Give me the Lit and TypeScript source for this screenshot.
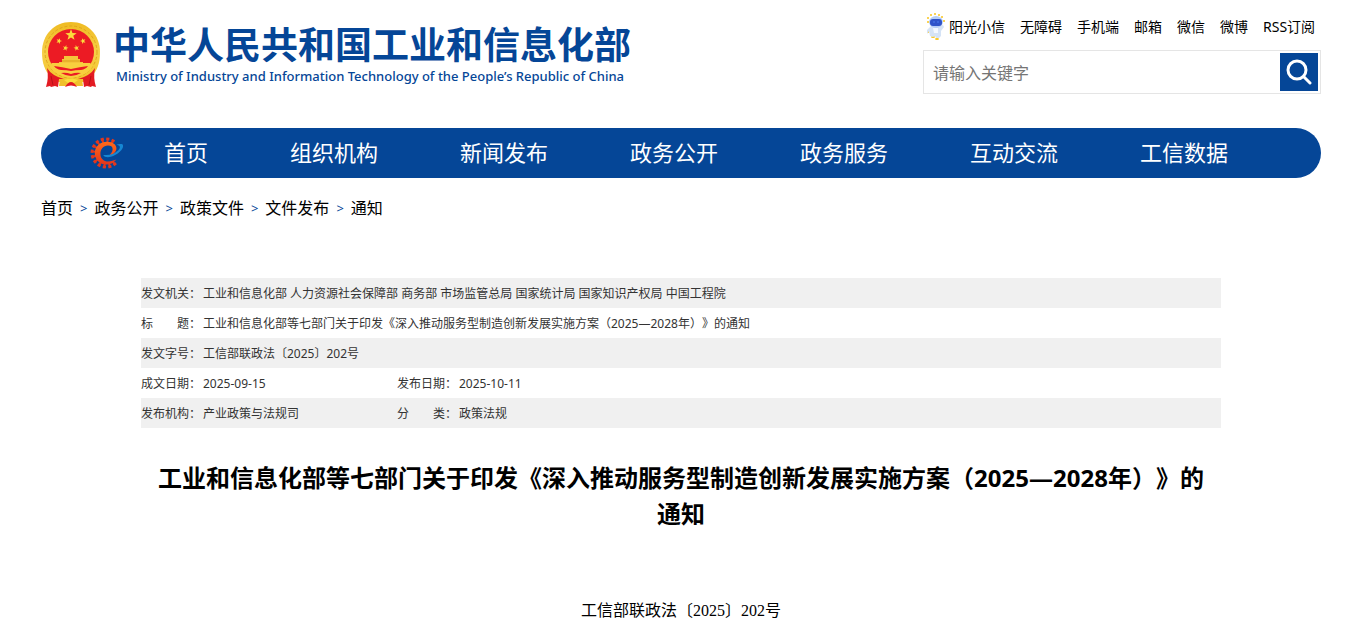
import { LitElement, html, css, svg } from "lit";
import { customElement } from "lit/decorators.js";

const star = (cx: number, cy: number, r: number, turn = 0) => {
  const points = Array.from({ length: 10 }, (_, i) => {
    const a = ((i * 36 - 90 + turn) * Math.PI) / 180;
    const d = i % 2 ? r * 0.4 : r;
    return `${(cx + d * Math.cos(a)).toFixed(2)},${(cy + d * Math.sin(a)).toFixed(2)}`;
  }).join(" ");
  return svg`<polygon points=${points} fill="#fbdc3c" />`;
};

const emblem = html`
  <svg class="emblem" viewBox="0 0 60 66" aria-hidden="true">
    <defs>
      <linearGradient id="gold" x1="0" y1="0" x2="0" y2="1">
        <stop offset="0" stop-color="#efbb22" />
        <stop offset="0.5" stop-color="#f6cf48" />
        <stop offset="1" stop-color="#f3c42c" />
      </linearGradient>
    </defs>
    <path d="M30 0C47 0 59 13 59 30c0 12-3 18-8 24l-6 6H15l-6-6C4 48 1 42 1 30 1 13 13 0 30 0Z" fill="url(#gold)" />
    <circle cx="30" cy="30" r="26" fill="none" stroke="#e0a41c" stroke-width="1" stroke-dasharray="3 2" />
    <circle cx="30" cy="30" r="23" fill="#ec1b24" />
    ${star(30, 13, 6)} ${star(18, 19, 3, 20)} ${star(42, 19, 3, -20)} ${star(24.5, 26, 3, 15)} ${star(35.5, 26, 3, -15)}
    <path d="M23 34h14v3h2v3h3v3H18v-3h3v-3h2z" fill="#f4c53a" />
    <path d="M21 39h18" stroke="#dd9f1e" />
    <path d="M11 41h38l3 3q-6 10-22 12Q14 54 8 44z" fill="#f8cf3e" />
    <path d="M13 44q8 1 17 3 9-2 17-3-2 3-7 4-6 0-10 1-4-1-10-1-5-1-7-4z" fill="#ec1b24" />
    <path d="M20 51q5-1 10 1 5-2 10-1-5 3-10 3t-10-3z" fill="#ec1b24" />
    <path d="M6 46q5 8 17 11h-5l-1 8-3-1-4 1-1-1-4 1q3-9 1-19zM54 46q-5 8-17 11h5l1 8 3-1 4 1 1-1 4 1q-3-9-1-19z" fill="#e31a22" />
    <path d="M10 54l2 9M50 54l-2 9" stroke="#b81018" />
    <path d="M19 57h22l1 7h-7l-5-3-5 3h-7z" fill="#f0c02b" />
    <path d="M23 58q7-3 14 0l-4 3q-3-1-6 0z" fill="#fbdc3c" />
    <path d="M24 65q3-5 6-5t6 5q-6-3-12 0z" fill="#e31a22" />
  </svg>
`;

const teeth = Array.from({ length: 12 }, (_, i) => {
  const a = 52 + i * 22.5;
  return svg`<g transform="rotate(${a} 15 17)"><path d="M28.500 15.300h3v3.400h-3zM26 16h3v2h-3z" fill="#e2371d" /></g>`;
});

const gear = html`
  <svg class="gear" viewBox="-2 0 36 34" aria-hidden="true">
    <defs>
      <linearGradient id="flame" x1="0" y1="0" x2="0" y2="1">
        <stop offset="0" stop-color="#ff6a1a" />
        <stop offset="1" stop-color="#e4351c" />
      </linearGradient>
    </defs>
    ${teeth}
    <path d="M26 24C22 29 17 30 12 29 6 27 3 22 3 17 3 10 9 5 16 5c6 0 10 3 10 7 0 4-4 8-10 9 4-2 6-5 6-8 0-3-2-4-5-4-5 0-8 4-8 9s4 8 8 8 6-1 9-2z" fill="url(#flame)" />
    <path d="M26 8c4-1 7-1 7 1 1 4-6 10-13 12-4 1-7 0-8-2 6 1 12-1 16-5 3-3 2-5-2-6z" fill="#1687d3" />
    <path d="M13 18q0-6 5-8 4 0 3 3-2 4-8 5z" fill="#054697" />
  </svg>
`;

const robot = html`
  <svg class="robot" viewBox="0 0 18 27" aria-hidden="true">
    <g fill="#f9c51d">
      <circle cx="4" cy="2" r="1" /><circle cx="8" cy="1" r="1" /><circle cx="12" cy="2" r="1" />
      <circle cx="15" cy="4" r="1" /><circle cx="1" cy="5" r="1" /><circle cx="1" cy="9" r="1" />
      <circle cx="17" cy="8" r="1" /><circle cx="1" cy="19" r="1" />
      <ellipse cx="6" cy="24" rx="2" ry="1" /><ellipse cx="10" cy="26" rx="2" ry="1" />
    </g>
    <path d="M4 13h9l3-1 1 2-3 4v5l-2 2h-3l-1-2-2 1-3-1-1-5-2 3-1-3z" fill="#d5e3f6" />
    <path d="M6 15h5v5H7z" fill="#f3f8ff" />
    <ellipse cx="9" cy="9" rx="7" ry="6" fill="#b5cdf6" />
    <rect x="3" y="6" width="12" height="7" rx="3" fill="#3053c8" />
    <path d="M6 9h2M10 9h2" stroke="#4a7cf0" />
  </svg>
`;

@customElement("app-root")
export class AppRoot extends LitElement {
  static styles = css`
    :host {
      display: block;
      --blue: #054697;
      font-family: "Noto Sans", "Noto Sans CJK SC", sans-serif;
      text-spacing-trim: space-all;
      color: #000;
      background: #fff;
    }
    a { color: inherit; text-decoration: none; }
    .page { padding: 0 29px 0 41px; }
    .header { display: flex; justify-content: space-between; height: 128px; }
    .brand { display: flex; gap: 12px; padding-top: 22px; height: 66px; color: var(--blue); }
    .emblem { width: 60px; height: 66px; }
    .names { display: flex; flex-direction: column; white-space: nowrap; padding-top: 4px; }
    .name-zh { font-family: "Liberation Sans", "Noto Sans CJK SC", sans-serif; font-size: 37px; line-height: 42px; font-weight: 700; }
    .name-en { font-size: 13px; line-height: 16px; font-weight: 500; padding-left: 3px; }
    .tools { width: 398px; padding-top: 14px; }
    .quick { display: flex; align-items: center; gap: 15px; height: 24px; padding-left: 4px; font-size: 14px; white-space: nowrap; }
    .quick a { display: flex; align-items: center; }
    .robot { width: 18px; height: 27px; margin-right: 4px; }
    .search { display: flex; margin-top: 12px; border: 1px solid #e5e5e5; padding: 2px; height: 38px; }
    .search input { flex: 1; min-width: 0; border: 0; outline: 0; padding: 2px 7px 0; font: inherit; font-size: 16px; background: none; }
    .search input::placeholder { color: #757575; opacity: 1; }
    .search button { width: 38px; height: 38px; border: 0; padding: 0; background: var(--blue); display: grid; place-items: center; }
    .search svg { width: 26px; height: 26px; }
    .nav { display: flex; align-items: center; height: 50px; border-radius: 25px; background: var(--blue); color: #fff; padding-left: 49px; font-size: 22px; white-space: nowrap; }
    .gear { width: 34px; height: 32px; margin-right: 40px; }
    .nav-links { display: flex; gap: 82px; padding-bottom: 4px; }
    .crumbs { display: flex; align-items: center; gap: 7px; padding-top: 18px; font-size: 16px; line-height: 24px; }
    .crumbs span { color: var(--blue); font-size: 13px; }
    .article { margin: 58px 100px 0; }
    .meta { width: 100%; border-collapse: collapse; font-size: 12px; line-height: 18px; color: #333; table-layout: fixed; }
    .meta tr { height: 30px; }
    .meta tr:nth-child(odd) { background: #f0f0f0; }
    .meta th, .meta td { padding: 2px 0 0; text-align: left; font-weight: 400; white-space: nowrap; }
    .col-label { width: 62px; }
    .col-value { width: 194px; }
    h1 { margin: 32px 0 0; padding: 0 8px; font-size: 24px; line-height: 36px; font-weight: 700; text-align: center; }
    .number { margin: 65px 0 0; padding-bottom: 6px; font-family: "Liberation Serif", "Noto Sans CJK SC", serif; font-size: 16px; line-height: 28px; text-align: center; }
  `;

  render() {
    const quick = ["无障碍", "手机端", "邮箱", "微信", "微博", "RSS订阅"];
    const nav = ["首页", "组织机构", "新闻发布", "政务公开", "政务服务", "互动交流", "工信数据"];
    const crumbs = ["首页", "政务公开", "政策文件", "文件发布", "通知"];
    return html`
      <div class="page">
        <header class="header">
          <a class="brand" href="#">
            ${emblem}
            <div class="names">
              <div class="name-zh">中华人民共和国工业和信息化部</div>
              <div class="name-en">Ministry of Industry and Information Technology of the People’s Republic of China</div>
            </div>
          </a>
          <div class="tools">
            <div class="quick">
              <a href="#">${robot}阳光小信</a>
              ${quick.map((t) => html`<a href="#">${t}</a>`)}
            </div>
            <form class="search">
              <input type="text" aria-label="请输入关键字" placeholder="请输入关键字" />
              <button type="button" aria-label="搜索">
                <svg viewBox="0 0 26 26" fill="none" stroke="#fff" stroke-width="3" stroke-linecap="round">
                  <circle cx="11" cy="11" r="9" /><path d="M18 18l6 6" />
                </svg>
              </button>
            </form>
          </div>
        </header>
        <nav class="nav">
          ${gear}
          <div class="nav-links">${nav.map((t) => html`<a href="#">${t}</a>`)}</div>
        </nav>
        <div class="crumbs">
          ${crumbs.map((t, i) => html`${i ? html`<span>&gt;</span>` : ""}<a href="#">${t}</a>`)}
        </div>
        <main class="article">
          <table class="meta">
            <colgroup><col class="col-label" /><col class="col-value" /><col class="col-label" /><col /></colgroup>
            <tbody>
              <tr><th scope="row">发文机关：</th><td colspan="3">工业和信息化部 人力资源社会保障部 商务部 市场监管总局 国家统计局 国家知识产权局 中国工程院</td></tr>
              <tr><th scope="row">标　　题：</th><td colspan="3">工业和信息化部等七部门关于印发《深入推动服务型制造创新发展实施方案（2025—2028年）》的通知</td></tr>
              <tr><th scope="row">发文字号：</th><td colspan="3">工信部联政法〔2025〕202号</td></tr>
              <tr><th scope="row">成文日期：</th><td>2025-09-15</td><th scope="row">发布日期：</th><td>2025-10-11</td></tr>
              <tr><th scope="row">发布机构：</th><td>产业政策与法规司</td><th scope="row">分　　类：</th><td>政策法规</td></tr>
            </tbody>
          </table>
          <h1>工业和信息化部等七部门关于印发《深入推动服务型制造创新发展实施方案（2025—2028年）》的通知</h1>
          <p class="number">工信部联政法〔2025〕202号</p>
        </main>
      </div>
    `;
  }
}
